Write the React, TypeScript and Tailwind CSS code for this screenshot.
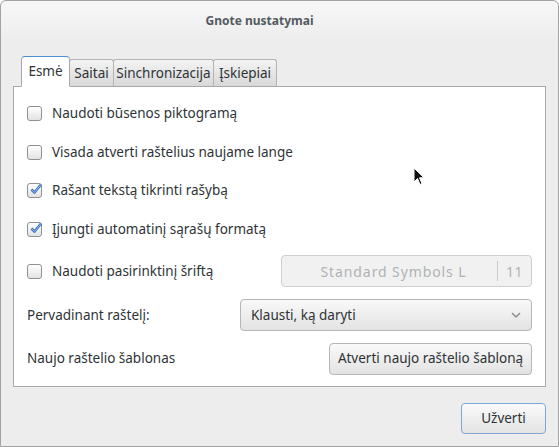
import React from "react";

const font = { fontFamily: '"Noto Sans", "DejaVu Sans", sans-serif' };

const Check = ({ checked }: { checked?: boolean }) => (
    <div className="relative w-[15px] h-[15px] rounded-[3px] border border-[#8e9192] bg-gradient-to-b from-white to-[#e3e3e3] shrink-0">
        {checked && (
            <svg className="absolute left-[1px] top-[-2px]" width="14" height="14" viewBox="0 0 14 14">
                <path d="M2.5 7.5 L5.5 10.5 L12 2.5" fill="none" stroke="#3f75c2" strokeWidth="2.6" strokeLinejoin="round" />
                <path d="M2.5 7.5 L5.5 10.5 L12 2.5" fill="none" stroke="#8fb4e6" strokeWidth="1" strokeLinejoin="round" />
            </svg>
        )}
    </div>
);

const CheckRow = ({ label, checked, h }: { label: string; checked?: boolean; h: string }) => (
    <div className={`flex items-center gap-[10px] ${h}`}>
        <Check checked={checked} />
        <span>{label}</span>
    </div>
);

const Tab = ({ label, active, w }: { label: string; active?: boolean; w: string }) =>
    active ? (
        <div className={`${w} h-[31px] -mb-px relative z-10 flex items-center justify-center bg-white border border-[#a8a8a8] border-b-white border-t-[#4a90d9] rounded-t-[4px]`}>
            {label}
        </div>
    ) : (
        <div className={`${w} h-[27px] flex items-center justify-center bg-gradient-to-b from-[#f4f4f4] to-[#d8d8d8] border border-[#b3b3b3] border-b-0 rounded-t-[3px] -ml-px`}>
            {label}
        </div>
    );

export default function App() {
    return (
        <div style={font} className="relative w-[559px] h-[447px] flex flex-col bg-[#ededed] border border-[#a2a2a2] rounded-t-[6px] text-[13.5px] text-[#2e3436] overflow-hidden">
            {/* title bar */}
            <div className="h-[39px] shrink-0 flex items-center justify-center pr-[40px] bg-gradient-to-b from-[#f8f8f8] to-[#ededed] rounded-t-[6px]">
                <span className="font-bold text-[12px] text-[#535b5f]">Gnote nustatymai</span>
            </div>

            <div className="flex flex-col px-[12px] pt-[15px]">
                {/* tabs */}
                <div className="flex items-end pl-[8px] h-[31px]">
                    <Tab label="Esmė" active w="w-[49px]" />
                    <Tab label="Saitai" w="w-[45px]" />
                    <Tab label="Sinchronizacija" w="w-[101px]" />
                    <Tab label="Įskiepiai" w="w-[64px]" />
                </div>

                {/* notebook page */}
                <div className="h-[301px] bg-white border border-[#a8a8a8] flex flex-col pt-[7px] pl-[13px] pr-[13px]">
                    <CheckRow label="Naudoti būsenos piktogramą" h="h-[39px]" />
                    <CheckRow label="Visada atverti raštelius naujame lange" h="h-[38px]" />
                    <CheckRow label="Rašant tekstą tikrinti rašybą" checked h="h-[39px]" />
                    <CheckRow label="Įjungti automatinį sąrašų formatą" checked h="h-[39px]" />

                    <div className="flex items-center justify-between h-[44px]">
                        <div className="flex items-center gap-[10px]">
                            <Check />
                            <span>Naudoti pasirinktinį šriftą</span>
                        </div>
                        <div className="w-[251px] h-[32px] flex items-center rounded-[4px] border border-[#cfcfcf] bg-[#f1f1f1] text-[#b0b3b4] text-[14px]">
                            <span className="flex-1 text-center pl-[8px] tracking-[0.9px]">Standard Symbols L</span>
                            <div className="w-px h-[20px] bg-[#c9c9c9]" />
                            <span className="w-[33px] text-center tracking-[0.5px]">11</span>
                        </div>
                    </div>

                    <div className="flex items-center justify-between h-[44px]">
                        <span>Pervadinant raštelį:</span>
                        <div className="w-[292px] h-[32px] flex items-center justify-between pl-[10px] pr-[9px] rounded-[4px] border border-[#b6b6b3] bg-gradient-to-b from-[#f9f9f9] to-[#e3e3e3]">
                            <span>Klausti, ką daryti</span>
                            <svg width="12" height="8" viewBox="0 0 12 8">
                                <path d="M2 2 L6 6 L10 2" fill="none" stroke="#8a8e90" strokeWidth="1.5" />
                            </svg>
                        </div>
                    </div>

                    <div className="flex items-center justify-between h-[43px]">
                        <span>Naujo raštelio šablonas</span>
                        <div className="w-[203px] h-[32px] flex items-center justify-center rounded-[4px] border border-[#b6b6b3] bg-gradient-to-b from-[#f9f9f9] to-[#e3e3e3]">
                            Atverti naujo raštelio šabloną
                        </div>
                    </div>
                </div>

                {/* action area */}
                <div className="flex justify-end pt-[16px]">
                    <div className="w-[85px] h-[31px] flex items-center justify-center rounded-[4px] border border-[#7fa6d6] bg-gradient-to-b from-[#fafafa] to-[#e3e3e3]">
                        Užverti
                    </div>
                </div>
            </div>

            {/* mouse pointer */}
            <svg className="absolute left-[412px] top-[166px]" width="14" height="20" viewBox="0 0 14 20">
                <path d="M1 1 L1 15 L4.5 11.5 L7 17.5 L9 16.5 L6.5 10.8 L11 10.8 Z" fill="#111" stroke="#fff" strokeWidth="1" />
            </svg>
        </div>
    );
}
